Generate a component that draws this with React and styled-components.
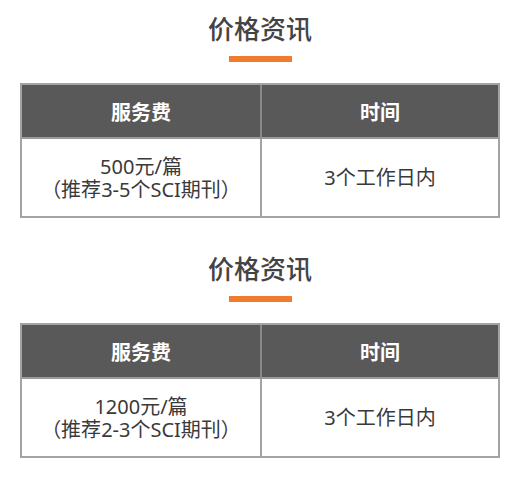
import React from 'react'
import styled, { createGlobalStyle } from 'styled-components'

const GlobalStyle = createGlobalStyle`
    html, body {
        margin: 0;
        padding: 0;
        background: #fff;
    }
    body {
        font-family: "Noto Sans", "Noto Sans CJK SC", sans-serif;
        text-spacing-trim: space-all;
    }
`

const Page = styled.div`
    width: 520px;
    display: flex;
    flex-direction: column;
`

const Section = styled.section`
    height: 240px;
    display: flex;
    flex-direction: column;
    align-items: center;
    padding-top: 11px;
    box-sizing: border-box;
`

const Title = styled.h2`
    margin: 0;
    font-size: 26px;
    line-height: 36px;
    font-weight: 500;
    color: #444;
`

const Bar = styled.div`
    width: 63px;
    height: 6px;
    margin-top: 9px;
    background: #ee7d2e;
`

const Table = styled.div`
    margin-top: 21px;
    width: 480px;
    display: grid;
    grid-template-columns: 1fr 1fr;
    grid-template-rows: 54px 77px;
    border: 2px solid #a3a3a3;
    box-sizing: border-box;
`

const HeadCell = styled.div`
    display: flex;
    align-items: center;
    justify-content: center;
    background: #595959;
    color: #fff;
    font-size: 20px;
    font-weight: 700;
    border-left: ${p => (p.$first ? 'none' : '2px solid #8a8a8a')};
    border-bottom: 2px solid #9a9a9a;
`

const Cell = styled.div`
    display: flex;
    flex-direction: column;
    align-items: center;
    justify-content: center;
    color: #3a3a3a;
    font-size: 20px;
    line-height: 23px;
    text-align: center;
    border-left: ${p => (p.$first ? 'none' : '2px solid #a3a3a3')};
`

const Line = styled.div`
    height: 23px;
    line-height: 23px;
    white-space: nowrap;
`

const PriceBlock = ({ price, range }) => (
    <Section>
        <Title>价格资讯</Title>
        <Bar />
        <Table>
            <HeadCell $first>服务费</HeadCell>
            <HeadCell>时间</HeadCell>
            <Cell $first>
                <Line>{price}元/篇</Line>
                <Line>（推荐{range}个SCI期刊）</Line>
            </Cell>
            <Cell>3个工作日内</Cell>
        </Table>
    </Section>
)

export default function App() {
    return (
        <Page>
            <GlobalStyle />
            <PriceBlock price="500" range="3-5" />
            <PriceBlock price="1200" range="2-3" />
        </Page>
    )
}
